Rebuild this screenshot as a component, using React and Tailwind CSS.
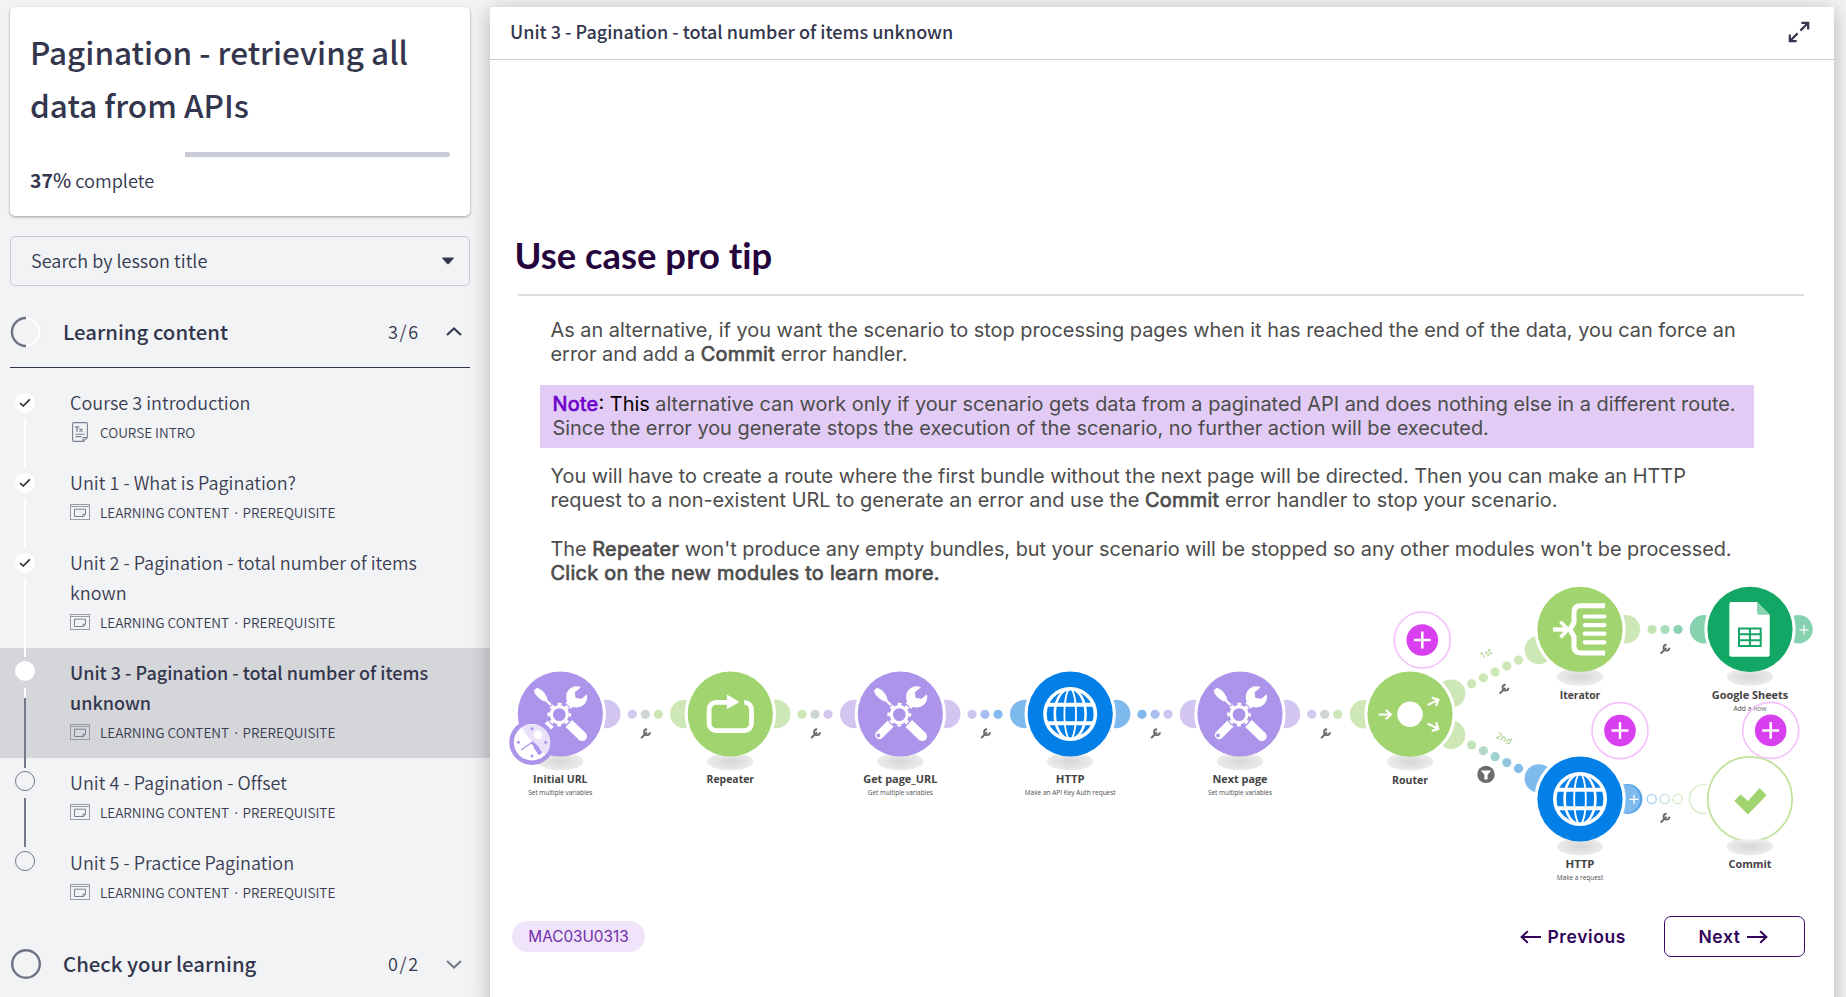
import React from 'react';

const PURPLE = '#ab94ea';
const PURPLE_LIGHT = '#d2c5ef';
const GREEN = '#a1d46e';
const GREEN_LIGHT = '#cee7b6';
const BLUE = '#0380e8';
const BLUE_LIGHT = '#7fbaef';
const SHEETS = '#12a764';
const SHEETS_LIGHT = '#86d1b0';

/* ---------- sidebar ---------- */

function CheckMark() {
  return (
    <svg width="12" height="10" viewBox="0 0 12 10" fill="none" stroke="#23252f" strokeWidth="1.6">
      <path d="M1.2 5.2 4.2 8 10.8 1.4" />
    </svg>
  );
}

function LessonIcon() {
  return (
    <svg width="20" height="16" viewBox="0 0 20 16" fill="none" stroke="#9a9caa" strokeWidth="1">
      <rect x="0.5" y="0.5" width="19" height="15" />
      <path d="M0.5 2.5H19.5" />
      <path d="M4.5 5.2H15.5V10.2L13.5 12.5H4.5ZM15.5 10.2H13V12.5" stroke="#7d8092" />
    </svg>
  );
}

function TextIcon() {
  return (
    <svg width="20" height="20" viewBox="0 0 20 20" fill="none" stroke="#7b7f91" strokeWidth="1.1">
      <path d="M4 .6H16A1.4 1.4 0 0 1 17.4 2V15.5L13.2 19.4H4A1.4 1.4 0 0 1 2.6 18V2A1.4 1.4 0 0 1 4 .6Z" />
      <path d="M17.4 15.5H13.2V19.4M5.5 12.3H14.5M5.5 14.6H11.5" />
      <path d="M4.8 4.8H9.2M7 4.8V9.8M9.4 6.6 12.4 9.8M12.4 6.6 9.4 9.8" strokeWidth="1.3" />
    </svg>
  );
}

function Lesson({ title, meta, done, active, text, line, tail }) {
  return (
    <div className={'relative flex pt-[9px] pb-[11px] pl-[70px] ' + (active ? 'bg-[#d5d6da]' : '')}>
      <div
        className={
          'absolute left-[15px] flex h-5 w-5 items-center justify-center rounded-full ' +
          (done ? 'top-[15px] bg-white' : active ? 'top-[13px] bg-white' : 'top-[13px] border border-[#74788a]')
        }
      >
        {done && <CheckMark />}
      </div>
      {line && (
        <div
          className={
            'absolute top-[40px] left-[24px] z-10 w-[2px] ' +
            (tail === 'next' ? '-bottom-[10px] ' : '-bottom-[9px] ') +
            (done ? 'bg-white' : 'bg-[#757989]')
          }
        >
          {active && <div className="h-[10px] w-full bg-white" />}
        </div>
      )}
      <div className="w-[370px] text-[#3a3d52]">
        <div className={'text-[18px] leading-[30px] ' + (active ? 'font-medium text-[#33364d]' : 'font-[350] tracking-[0.03px]')}>{title}</div>
        <div className="flex h-[30px] items-center text-[13.55px] leading-[30px] font-[350]">
          <span className="mr-[10px] flex w-5">{text ? <TextIcon /> : <LessonIcon />}</span>
          {meta.map((m, i) => (
            <React.Fragment key={m}>
              {i > 0 && <span className="w-[13.5px] pl-[3.5px]">·</span>}
              <span>{m}</span>
            </React.Fragment>
          ))}
        </div>
      </div>
    </div>
  );
}

function Section({ title, count, open, children }) {
  return (
    <>
      <div
        className={
          'mt-[10px] mr-[20px] ml-[10px] flex h-[72px] items-center text-[#33364d] ' + (open ? 'border-b border-[#33364d]' : '')
        }
      >
        <svg width="32" height="32" viewBox="0 0 32 32" fill="none">
          {open ? (
            <>
              <circle cx="16" cy="16" r="14.6" stroke="#d3d5db" strokeWidth="0.8" />
              <circle cx="16" cy="16" r="13.6" stroke="#ffffff" strokeWidth="2.2" />
              <path d="M16 2A14 14 0 0 0 16 30" stroke="#6f7285" strokeWidth="2.4" />
            </>
          ) : (
            <circle cx="16" cy="16" r="13.8" stroke="#6f7285" strokeWidth="2.4" />
          )}
        </svg>
        <span className="mb-[2px] ml-[21px] flex-1 text-[20.35px] leading-[30px] font-medium">{title}</span>
        <span className="mb-[2px] w-[58px] text-[18px] leading-[30px] font-[350] tracking-[1.6px]">{count}</span>
        <svg className="mr-[8px]" width="16" height="9" viewBox="0 0 16 9" fill="none" stroke={open ? '#33364d' : '#757989'} strokeWidth="2">
          <path d={open ? 'M1 8 8 1.4 15 8' : 'M1 1 8 7.6 15 1'} />
        </svg>
      </div>
      {children}
    </>
  );
}

const LC = ['LEARNING CONTENT', 'PREREQUISITE'];

function Sidebar() {
  return (
    <aside className="w-[490px] shrink-0 pt-[7px] font-['Noto_Sans_CJK_JP','Noto_Sans',sans-serif]">
      <div className="mr-[20px] ml-[10px] h-[209px] rounded-[5px] bg-white px-5 pt-[18px] shadow-[0_1px_3px_rgba(0,0,0,0.35)]">
        <h1 className="text-[31.5px] leading-[53px] font-medium whitespace-nowrap text-[#33364d]">
          Pagination - retrieving all
          <br />
          data from APIs
        </h1>
        <div className="mt-[21px] flex h-[5px] overflow-hidden rounded-full">
          <div className="w-[155px] bg-white" />
          <div className="flex-1 bg-[#c8cad6]" />
        </div>
        <div className="mt-[8px] text-[18.2px] leading-[30px] font-[350] text-[#33364d]">
          <span className="text-[19.4px]">
            <b className="font-bold">37</b>
            <span className="font-medium">%</span>
          </span>{' '}
          complete
        </div>
      </div>

      <div className="mt-5 mr-[20px] ml-[10px] flex h-[50px] items-center justify-between rounded-[5px] border border-[#c8cad6] pr-[15px] pl-[20px] text-[#33364d]">
        <span className="mb-[2px] text-[18px] leading-[30px] font-[350] tracking-[0.04px]">Search by lesson title</span>
        <svg width="12" height="8" viewBox="0 0 12 8">
          <path d="M.8.4H11.2C12 .4 12.1 1 11.6 1.5L6.8 6.9Q6 7.6 5.2 6.9L.4 1.5C-.1 1 0 .4.8.4Z" fill="#33364d" />
        </svg>
      </div>

      <Section title="Learning content" count="3/6" open>
        <div className="mt-[10px]">
          <Lesson title="Course 3 introduction" meta={['COURSE INTRO']} done text line />
          <Lesson title="Unit 1 - What is Pagination?" meta={LC} done line />
          <Lesson title="Unit 2 - Pagination - total number of items known" meta={LC} done line />
          <Lesson title="Unit 3 - Pagination - total number of items unknown" meta={LC} active line tail="next" />
          <Lesson title="Unit 4 - Pagination - Offset" meta={LC} line />
          <Lesson title="Unit 5 - Practice Pagination" meta={LC} />
        </div>
      </Section>
      <Section title="Check your learning" count="0/2" />
    </aside>
  );
}

/* ---------- scenario diagram ---------- */

function Wrench({ x, y }) {
  return (
    <g transform={`translate(${x} ${y})`}>
      <path d="M-3.8 4 1 -0.6" stroke="#6a6a6a" strokeWidth="2" strokeLinecap="round" />
      <path d="M1.6 -4.2A2.9 2.9 0 1 0 4.4 -1.2" stroke="#6a6a6a" strokeWidth="1.9" fill="none" />
    </g>
  );
}

function Ear({ x, y, color, outline }) {
  return <circle cx={x} cy={y} r={outline ? 14.5 : 14.2} fill={outline ? '#fff' : color} stroke={outline ? color : 'none'} strokeWidth="1.2" />;
}

function Plus({ x, y, s = 4.5, w = 1.3 }) {
  return <path d={`M${x - s} ${y}H${x + s}M${x} ${y - s}V${y + s}`} stroke="#fff" strokeWidth={w} />;
}

function Node({ x, y, color, ears = [], name, nameW, sub, subW, outline, children }) {
  return (
    <g>
      <ellipse cx={x} cy={y + 47.5} rx="23.2" ry="9" fill="url(#shade)" />
      {ears.map(([dx, dy, c, o], i) => (
        <Ear key={i} x={x + dx} y={y + dy} color={c} outline={o} />
      ))}
      {ears.length > 0 && <path d={`M${x - 45.6} ${y}A45.6 45.6 0 0 1 ${x + 45.6} ${y}A45.6 45.6 0 0 1 ${x + 30} ${y + 34}L${x - 30} ${y + 34}A45.6 45.6 0 0 1 ${x - 45.6} ${y}Z`} fill="#fff" />}
      <circle cx={x} cy={y} r={outline ? 42.2 : 42.6} fill={outline ? '#fff' : color} stroke={outline ? '#bfe298' : 'none'} strokeWidth="1.7" />
      {outline && <path d={`M${x - 16} ${y + 40.5}A42 42 0 0 0 ${x + 16} ${y + 40.5}`} fill="#ececec" />}
      <g transform={`translate(${x} ${y})`}>{children}</g>
      <text x={x} y={y + 69.3} textAnchor="middle" textLength={nameW} lengthAdjust="spacingAndGlyphs" fontSize="11.2" fontWeight="700" fill="#444">
        {name}
      </text>
      {sub && (
        <text x={x} y={y + 81.3} textAnchor="middle" textLength={subW} lengthAdjust="spacingAndGlyphs" fontSize="7.8" fill="#4c4c4c">
          {sub}
        </text>
      )}
    </g>
  );
}

function ToolsGlyph() {
  return (
    <g>
      <path d="M-26.4 -23.4 -23.4 -26.2Q-17 -24.5 -13.6 -17.2L-12.6 -13.8 -16.2 -12.4 -19.6 -14.6Q-25.6 -18.6 -26.4 -23.4Z" fill="#fff" />
      <path d="M-15.5 -15 -7 -6.6" stroke="#fff" strokeWidth="2.4" />
      <path d="M7 -7 12.5 -12.5" stroke="#fff" strokeWidth="8" />
      <path d="M20.6 -26.8A10.6 10.6 0 1 0 26.6 -19.8L21.4 -15.2 15.2 -16.2 14.6 -21.8Z" fill="#fff" />
      <path d="M-7.5 7.5 -21 21" stroke="#fff" strokeWidth="8.4" strokeLinecap="round" />
      <circle cx="-22" cy="21.5" r="1.9" fill={PURPLE} />
      <path d="M8.5 9.5 22.6 23" stroke="#fff" strokeWidth="9.4" />
      <circle cx="22" cy="22.4" r="4.7" fill="#fff" />
      <circle cx="-1" cy="0.6" r="12.8" fill={PURPLE} />
      <circle cx="-1" cy="0.6" r="8" fill="none" stroke="#fff" strokeWidth="3.2" />
      <circle cx="-1" cy="0.6" r="10.6" fill="none" stroke="#fff" strokeWidth="2.6" strokeDasharray="4 4.325" strokeDashoffset="2" />
    </g>
  );
}

function RepeatGlyph() {
  return (
    <g>
      <path d="M14 -11.6A7 7 0 0 1 21.2 -4.6V9.6A7 7 0 0 1 14.2 16.6H-14.2A7 7 0 0 1 -21.2 9.6V-4.6A7 7 0 0 1 -14.2 -11.6H0" fill="none" stroke="#fff" strokeWidth="4.8" />
      <path d="M-3.4 -19.6 9.2 -12 -3.4 -4.8Z" fill="#fff" />
    </g>
  );
}

function GlobeGlyph() {
  return (
    <g fill="none" stroke="#fff">
      <circle r="25.2" strokeWidth="3.6" />
      <ellipse rx="15.4" ry="25.2" strokeWidth="2.6" />
      <ellipse rx="5.8" ry="25.2" strokeWidth="1.8" />
      <path d="M-24 -9.2H24M-24 9.2H24" strokeWidth="4" />
    </g>
  );
}

function RouterGlyph() {
  const arrow = 'M-6 0H5.6M1 -4.8 6 0 1 4.8';
  return (
    <g fill="none" stroke="#fff" strokeWidth="2.2">
      <circle r="12.7" fill="#fff" stroke="none" />
      <path d={arrow} transform="translate(-25.3 .3)" />
      <path d={arrow} transform="translate(23 -11.8) rotate(-27)" />
      <path d={arrow} transform="translate(23 12) rotate(27)" />
    </g>
  );
}

function IteratorGlyph() {
  return (
    <g fill="none" stroke="#fff">
      <path d="M25 -23.6H.5Q-6 -23.6 -6 -17V-7L-10 .2 -6 7.4V17Q-6 23.6 .5 23.6H25" strokeWidth="5" />
      <path d="M4.8 -12.8H24.4M4.8 -4.2H24.4M4.8 4.4H24.4M4.8 13H24.4" strokeWidth="4.2" strokeLinecap="round" />
      <path d="M-27 .2H-14" strokeWidth="4.4" />
      <path d="M-19.5 -7.6 -12 .2 -19.5 8" strokeWidth="3.6" />
    </g>
  );
}

function SheetGlyph() {
  return (
    <g>
      <path d="M-18.7 -27.2H7L19.7 -14.5V25.4A2 2 0 0 1 17.7 27.4H-18.7A2 2 0 0 1 -20.7 25.4V-25.2A2 2 0 0 1 -18.7 -27.2Z" fill="#fff" />
      <path d="M7 -27.2 19.7 -14.5H9A2 2 0 0 1 7 -16.5Z" fill="#88d3b1" />
      <path d="M-11 -.8H10.7V16.8H-11ZM-11 5H10.7M-11 10.9H10.7M-.1 -.8V16.8" fill="none" stroke={SHEETS} strokeWidth="2" />
    </g>
  );
}

function Clock({ x, y }) {
  return (
    <g transform={`translate(${x} ${y})`}>
      <circle r="22.7" fill={PURPLE} />
      <circle r="18.2" fill="#fff" />
      <path d="M0 0 -10.5 -14.8A18.2 18.2 0 0 1 13.5 12.2Z" fill="#e8e1f9" />
      <circle cx="6" cy="-7.5" r="4.4" fill="#fff" />
      <path d="M0 0 -11 7.6" stroke={PURPLE} strokeWidth="1.2" />
      <path d="M0 0 4.4 4.8" stroke={PURPLE} strokeWidth="3" />
      <path d="M3.2 3.6 8.6 11.6" stroke={PURPLE} strokeWidth="4.4" />
      {[[0, -13.6], [0, 13.6], [-13.6, 0], [13.6, 0]].map(([a, b]) => (
        <circle key={a + ',' + b} cx={a} cy={b} r="1.5" fill={PURPLE} />
      ))}
    </g>
  );
}

function Hotspot({ x, y }) {
  return (
    <g>
      <circle cx={x} cy={y} r="28" fill="#fff" fillOpacity="0.2" stroke="#f4c2fb" strokeWidth="1.6" />
      <circle cx={x} cy={y} r="15.8" fill="#d73fef" />
      <Plus x={x} y={y} s={8.4} w={2.5} />
    </g>
  );
}

function Dots({ x, y, colors, hollow }) {
  return colors.map((c, i) => (
    <circle key={i} cx={x + i * 13} cy={y} r="4.6" fill={hollow ? '#fff' : c} stroke={hollow ? c : 'none'} strokeWidth="1.4" />
  ));
}

function Scenario() {
  const both = (c) => [[-46, 0, c], [46, 0, c]];
  return (
    <svg className="block font-['Open_Sans','Noto_Sans',sans-serif]" width="1344" height="300" viewBox="490 586 1344 300">
      <defs>
        <radialGradient id="shade">
          <stop offset="0" stopColor="#d6d6d6" />
          <stop offset="1" stopColor="#ececec" />
        </radialGradient>
      </defs>

      <Dots x={632.3} y={714.3} colors={['#d3c8ee', '#cdd6d2', '#cde7b9']} />
      <Dots x={802} y={714.3} colors={['#cde7b9', '#cdd6d2', '#d3c8ee']} />
      <Dots x={972} y={714.3} colors={['#cdc5f1', '#a9bff0', '#82bbf0']} />
      <Dots x={1142} y={714.3} colors={['#7fbaef', '#a9bff0', '#cdc5f1']} />
      <Dots x={1311.7} y={714.3} colors={['#d3c8ee', '#cdd6d2', '#cde7b9']} />
      <Dots x={1652} y={629.5} colors={['#c3e4b3', '#a8ddba', '#8ad3b0']} />
      {['#cee7b6', '#cee7b6', '#cee7b6', '#cee7b6', '#cee7b6'].map((c, i) => (
        <circle key={i} cx={1471.7 + i * 11.7} cy={683.7 - i * 5.9} r="4.6" fill={c} />
      ))}
      {['#c5e3ba', '#b3dac8', '#a0d0d2', '#90c6de', '#83bee8'].map((c, i) => (
        <circle key={i} cx={1471.7 + i * 11.7} cy={745 + i * 5.85} r="4.6" fill={c} />
      ))}

      <Wrench x={645.5} y={733.5} />
      <Wrench x={815.5} y={733.5} />
      <Wrench x={985.5} y={733.5} />
      <Wrench x={1155.5} y={733.5} />
      <Wrench x={1325.5} y={733.5} />
      <Wrench x={1504} y={689} />
      <Wrench x={1665} y={649} />
      <Wrench x={1665} y={818} />

      <Node x={560.3} y={714} color={PURPLE} ears={[[46, 0, PURPLE_LIGHT]]} name="Initial URL" nameW={54.5} sub="Set multiple variables" subW={64}>
        <ToolsGlyph />
      </Node>
      <Clock x={532} y={742.3} />
      <Node x={730.3} y={714} color={GREEN} ears={both(GREEN_LIGHT)} name="Repeater" nameW={47.5}>
        <RepeatGlyph />
      </Node>
      <Node x={900.3} y={714} color={PURPLE} ears={both(PURPLE_LIGHT)} name="Get page_URL" nameW={74} sub="Get multiple variables" subW={65}>
        <ToolsGlyph />
      </Node>
      <Node x={1070.2} y={714} color={BLUE} ears={both(BLUE_LIGHT)} name="HTTP" nameW={29} sub="Make an API Key Auth request" subW={91}>
        <GlobeGlyph />
      </Node>
      <Node x={1240} y={714} color={PURPLE} ears={both(PURPLE_LIGHT)} name="Next page" nameW={55} sub="Set multiple variables" subW={64}>
        <ToolsGlyph />
      </Node>
      <Node
        x={1410}
        y={714.2}
        color={GREEN}
        ears={[[-46, 0, GREEN_LIGHT], [41.2, -20.6, GREEN_LIGHT], [41.2, 20.6, GREEN_LIGHT]]}
        name="Router"
        nameW={36}
      >
        <RouterGlyph />
      </Node>
      <Node x={1580} y={629.3} color={GREEN} ears={[[-41.2, 20.6, GREEN_LIGHT], [46, 0, GREEN_LIGHT]]} name="Iterator" nameW={40.5}>
        <IteratorGlyph />
      </Node>
      <Node x={1750} y={629.3} color={SHEETS} ears={[[-46, 0, SHEETS_LIGHT], [48.5, 0, SHEETS_LIGHT]]} name="Google Sheets" nameW={76.5} sub="Add a Row" subW={33}>
        <SheetGlyph />
        <Plus x={54} y={0.5} />
      </Node>

      <circle cx="1627.5" cy="799" r="14.9" fill="#4f9fe6" />
      <Node x={1580} y={799} color={BLUE} ears={[[-41.2, -20.6, BLUE_LIGHT], [46, 0, BLUE_LIGHT]]} name="HTTP" nameW={29} sub="Make a request" subW={46.5}>
        <GlobeGlyph />
        <Plus x={54} y={0.3} />
      </Node>
      <Dots x={1651.7} y={799} colors={['#a5d0f5', '#bfe0df', '#d3ebc2']} hollow />
      <Node x={1750} y={799} outline ears={[[-46, 0, '#d3ebc0', true]]} name="Commit" nameW={43}>
        <path d="M-15.7 1.8 -9.4 -4.6 -2 2 9.6 -11 16.6 -3.8 -2.2 15.6Z" fill={GREEN} />
      </Node>

      <text x="1486" y="656.5" transform="rotate(-26 1486 653.5)" textAnchor="middle" fontSize="8.8" fill="#98c66c">
        1st
      </text>
      <text x="1504" y="741.5" transform="rotate(27 1504 738.5)" textAnchor="middle" fontSize="8.8" fill="#98c66c">
        2nd
      </text>
      <circle cx="1486" cy="774.4" r="8.7" fill="#6c6c6c" />
      <path d="M1480.8 770.4H1491.2L1487.6 774.8V779.4H1484.4V774.8Z" fill="#fff" />

      <Hotspot x={1422.3} y={640} />
      <Hotspot x={1620} y={730.6} />
      <Hotspot x={1770.7} y={730.4} />
    </svg>
  );
}

/* ---------- lesson content ---------- */

function B({ children, className = '' }) {
  return <strong className={'font-normal tracking-[0.29px] [-webkit-text-stroke:0.7px_currentColor] ' + className}>{children}</strong>;
}

function Arrow({ flip }) {
  return (
    <svg width="22" height="14" viewBox="0 0 22 14" fill="none" stroke="#2f0459" strokeWidth="2" className={flip ? '-scale-x-100' : ''}>
      <path d="M1 7H20.4M14.2 1.2 20.4 7 14.2 12.8" />
    </svg>
  );
}

function Content() {
  return (
    <main className="relative z-10 mt-[7px] h-[1000px] w-[1344px] shrink-0 bg-white shadow-[0_4px_20px_rgba(0,0,0,0.26)]">
      <header className="flex h-[53px] items-center justify-between border-b border-[#c8cad6] pr-[24px] pl-[20px]">
        <span className="mb-[4px] font-['Noto_Sans_CJK_JP','Noto_Sans',sans-serif] text-[18px] leading-[30px] font-medium text-[#33364d]">
          Unit 3 - Pagination - total number of items unknown
        </span>
        <svg className="mb-[2px]" width="22" height="22" viewBox="0 0 22 22" fill="none" stroke="#33364d" strokeWidth="2.2">
          <path d="M13.4 1.8H20.2V8.6M20 2 12.4 9.6" />
          <path d="M8.6 20.2H1.8V13.4M2 20 9.6 12.4" />
        </svg>
      </header>

      <h2 className="mt-[173px] ml-[24.5px] font-[Lato,sans-serif] text-[36.4px] leading-[44px] font-bold text-[#25043d] [font-variant-ligatures:none]">
        Use case pro tip
      </h2>
      <div className="mt-[17px] mr-[30px] ml-[28px] h-[2px] bg-[#e0dbe0]" />

      <div className="font-[Inter,sans-serif] text-[19.9px] leading-[24.2px] whitespace-nowrap text-[#4c4c4c]">
        <p className="mt-[22px] ml-[60.5px]">
          As an alternative, if you want the scenario to stop processing pages when it has reached the end of the data, you can force an
          <br />
          error and add a <B>Commit</B> error handler.
        </p>
        <p className="mt-[18.6px] mr-[80px] ml-[49.5px] h-[63px] bg-[#e2ccf5] pt-[6.5px] pl-[13px]">
          <B className="text-[#6d00cc]">Note</B>
          <span className="text-black">: This</span> alternative can work only if your scenario gets data from a paginated API and does nothing else in a different route.
          <br />
          Since the error you generate stops the execution of the scenario, no further action will be executed.
        </p>
        <p className="mt-[15.8px] ml-[60.5px]">
          You will have to create a route where the first bundle without the next page will be directed. Then you can make an HTTP
          <br />
          request to a non-existent URL to generate an error and use the <B>Commit</B> error handler to stop your scenario.
        </p>
        <p className="mt-[24.6px] ml-[60.5px]">
          The <B>Repeater</B>
          <span className="tracking-[-0.03px]"> won't produce any empty bundles, but your scenario will be stopped so any other modules won't be processed.</span>
          <br />
          <B>Click on the new modules to learn more.</B>
        </p>
      </div>

      <div className="mt-[1px]">
        <Scenario />
      </div>

      <footer className="mt-[30px] flex h-[41px] items-center pr-[29px] pl-[22px] font-[Inter,sans-serif] text-[#2f0459]">
        <span className="flex h-[31px] w-[133px] items-center justify-center rounded-full bg-[#f0e4fb] pt-[2px] text-[15.3px] text-[#6f2da8]">
          MAC03U0313
        </span>
        <button className="ml-auto flex items-center gap-[5px] text-[17.5px] font-semibold tracking-[0.6px]">
          <Arrow flip />
          Previous
        </button>
        <button className="ml-[38px] flex h-[41px] w-[141px] items-center justify-center gap-[5px] rounded-[7px] border-[1.5px] border-[#3a0c66] pr-[3px] text-[17.5px] font-semibold tracking-[0.6px]">
          Next
          <Arrow />
        </button>
      </footer>
    </main>
  );
}

export default function App() {
  return (
    <div className="flex h-[997px] w-[1846px] overflow-hidden bg-[#f2f3f5]">
      <Sidebar />
      <Content />
    </div>
  );
}
